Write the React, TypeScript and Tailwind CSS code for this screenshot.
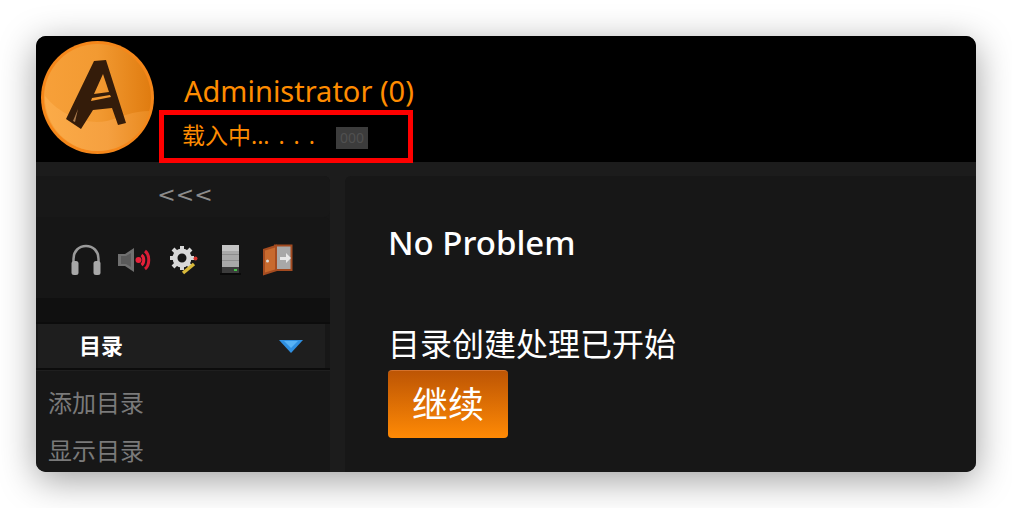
const cjk = "font-['Noto_Sans','Noto_Sans_CJK_SC',sans-serif]"

function Logo() {
  return (
    <svg width="113" height="113" viewBox="0 0 113 113" className="shrink-0">
      <defs>
        <linearGradient id="disc" x1="0" y1="0" x2="1" y2="0">
          <stop offset="0" stopColor="#f7a039" />
          <stop offset="0.5" stopColor="#f29a32" />
          <stop offset="1" stopColor="#e07c10" />
        </linearGradient>
        <linearGradient id="discLow" x1="0" y1="0" x2="1" y2="0">
          <stop offset="0" stopColor="#fbab48" />
          <stop offset="0.6" stopColor="#f5a040" />
          <stop offset="1" stopColor="#e98a20" />
        </linearGradient>
      </defs>
      <circle cx="56.5" cy="56.5" r="56.5" fill="#f5871a" />
      <circle cx="56.5" cy="56.5" r="53.5" fill="url(#disc)" />
      <path d="M4 55C20 75 45 84 66 80C80 76 92 70 109 70C102 94 82 110 56.5 110C27 110 3 84 4 55Z" fill="url(#discLow)" />
      <path
        fillRule="evenodd"
        d="M53 20L65 19L85 82L77 84L71 67L52 69L40 88L25 78ZM62 33L53 53L68 51Z"
        fill="#341c0a"
      />
      <path d="M51 57L69 54L70 56L50 60Z" fill="#f39a32" />
      <path d="M37 68L32 80L34 81Z" fill="#a8794c" />
    </svg>
  )
}

function Headphones() {
  return (
    <svg width="32" height="32" viewBox="0 0 32 32" className="blur-[0.6px]">
      <path d="M3.500 20V15C3.500 7 9 2 16 2S28.500 7 28.500 15V20" fill="none" stroke="#9a9a9a" strokeWidth="2.500" />
      <rect x="1.500" y="17" width="7" height="14" rx="2.500" fill="#a8a8a8" />
      <rect x="23.500" y="17" width="7" height="14" rx="2.500" fill="#a8a8a8" />
    </svg>
  )
}

function Speaker() {
  return (
    <svg width="33" height="26" viewBox="0 0 33 26" className="blur-[0.6px]">
      <path d="M0 7H7L16 1V25L7 19H0Z" fill="#707070" />
      <path d="M3 9H8L13 6V20L8 17H3Z" fill="#5a5a5a" />
      <circle cx="20.500" cy="13" r="3" fill="#e8213a" />
      <path d="M23.500 8C26.500 10 26.500 16 23.500 18" fill="none" stroke="#e8213a" strokeWidth="3" />
      <path d="M27 4C32 8 32 18 27 22" fill="none" stroke="#d81e36" strokeWidth="3" />
    </svg>
  )
}

function Gear() {
  return (
    <svg width="28" height="29" viewBox="0 0 28 29" className="blur-[0.4px]">
      <circle cx="12" cy="12" r="7" fill="none" stroke="#d8d8d8" strokeWidth="5" />
      <path
        d="M12 0V5M12 19V24M0 12H5M19 12H24M3 3L7 7M17 17L21 21M21 3L17 7M3 21L7 17"
        stroke="#d8d8d8"
        strokeWidth="4"
      />
      <path d="M13 27L24 18" stroke="#d8b93a" strokeWidth="3.500" />
      <circle cx="25.500" cy="12.500" r="2" fill="#d8322c" />
    </svg>
  )
}

function Server() {
  return (
    <svg width="21" height="30" viewBox="0 0 21 30" className="blur-[0.5px]">
      <rect x="2" y="0" width="17" height="27" fill="#a9a9a9" />
      <rect x="2" y="0" width="17" height="6" fill="#c4c4c4" />
      <rect x="2" y="9" width="17" height="1" fill="#8e8e8e" />
      <rect x="2" y="15" width="17" height="1" fill="#8e8e8e" />
      <rect x="2" y="22" width="17" height="6" fill="#3c3c3c" />
      <rect x="14" y="24" width="3" height="2" fill="#46c24a" />
      <rect x="0" y="28" width="21" height="2" fill="#0a0a0a" />
    </svg>
  )
}

function Door() {
  return (
    <svg width="31" height="32" viewBox="0 0 31 32" className="blur-[0.5px]">
      <path d="M12 0.500H30.500V27H12Z" fill="#a24a20" />
      <rect x="14" y="2.500" width="14.500" height="22.500" fill="#a8a8a8" />
      <path d="M18 13H24V9L29 14L24 19V16H18Z" fill="#e8e8e8" />
      <path d="M1 5L15 0.500V27L1 31.500Z" fill="#a54c20" />
      <path d="M3 6.500L13 3.500V25.500L3 28.500Z" fill="#c86a2e" />
      <circle cx="5.500" cy="17" r="1.500" fill="#d8d8d8" />
    </svg>
  )
}

export default function App() {
  return (
    <div className={`w-[1012px] h-[508px] bg-white pt-9 pl-9 ${cjk}`}>
      <div className="w-[940px] h-[436px] rounded-[10px] overflow-hidden bg-[#1c1c1c] flex flex-col shadow-[0_8px_36px_rgba(0,0,0,0.38)]">
        <header className="h-[126px] shrink-0 bg-black flex pl-[5px] pt-[5px]">
          <Logo />
          <div className="ml-[5px] flex flex-col w-[254px]">
            <div className="h-[69px] pl-[25px] pt-[30px] text-[29px] leading-[40px] text-[#ff8c00] whitespace-nowrap">
              Administrator (0)
            </div>
            <div className="h-[53px] shrink-0 border-[5px] border-[#ff0000] flex items-center pl-[18px] pb-[3px] relative z-10">
              <span className="text-[23px] leading-none text-[#ff8c00] whitespace-nowrap [word-spacing:3px]">载入中... . . .</span>
              <span className="ml-[21px] mt-[5px] w-[32px] h-[22px] bg-[#3c3c3c] text-[#505050] text-[14px] leading-[22px] text-center">
                000
              </span>
            </div>
          </div>
        </header>

        <div className="flex flex-1 pt-[14px] min-h-0">
          <aside className="w-[294px] shrink-0 flex flex-col bg-[#171717] rounded-tr-md">
            <div className="h-[41px] shrink-0 bg-[#181818] flex items-center justify-center pl-[4px] pb-[3px] font-['DejaVu_Sans',sans-serif] text-[22px] leading-none text-[#8c8c8c] rounded-r-md">
              {'<<<'}
            </div>
            <div className="h-[81px] shrink-0 bg-[#161616] rounded-tr-md flex items-center pl-[34px] pt-[5px]">
              <Headphones />
              <div className="ml-[16px]">
                <Speaker />
              </div>
              <div className="ml-[19px]">
                <Gear />
              </div>
              <div className="ml-[22px]">
                <Server />
              </div>
              <div className="ml-[21px]">
                <Door />
              </div>
            </div>
            <div className="h-[24px] shrink-0 bg-[#101010]" />
            <div className="h-[2px] shrink-0 bg-[#0c0c0c]" />
            <div className="h-[44px] shrink-0 ml-[2px] mr-[5px] bg-[#1e1e1e] flex items-center pl-[41px] pr-[21px] justify-between">
              <span className="text-[22px] font-bold text-white leading-none pb-[2px]">目录</span>
              <svg width="26" height="16" viewBox="0 0 26 16" className="blur-[0.5px]">
                <path d="M1 2H25L13 15Z" fill="#2f8fe0" />
                <path d="M6 3H20L13 10Z" fill="#57b2f5" />
              </svg>
            </div>
            <div className="h-[2px] shrink-0 bg-[#0c0c0c]" />
            <div className="h-[1px] shrink-0 bg-[#1f1f1f]" />
            <div className="flex-1 flex flex-col pl-[12px] pt-[20px] gap-[24px] text-[24px] leading-[24px] text-[#7a7a7a] overflow-hidden">
              <div>添加目录</div>
              <div>显示目录</div>
            </div>
          </aside>

          <main className="ml-[15px] flex-1 bg-[#171717] rounded-tl-md pl-[43px] pt-[45px] text-white">
            <div className="text-[33px] leading-[44px] font-medium">No Problem</div>
            <div className="mt-[57px] text-[32px] leading-[44px]">目录创建处理已开始</div>
            <button className="mt-[4px] w-[120px] h-[68px] rounded-[4px] bg-gradient-to-b from-[#bd5504] to-[#ff8a05] border-t border-[#d4722c] text-[36px] leading-none text-white">
              继续
            </button>
          </main>
        </div>
      </div>
    </div>
  )
}
